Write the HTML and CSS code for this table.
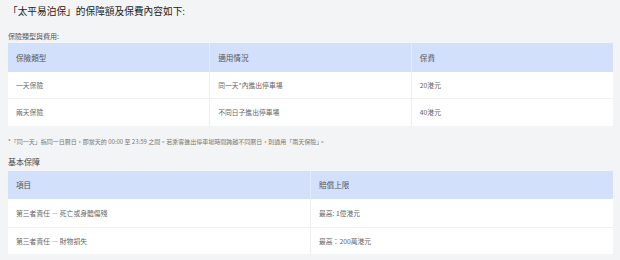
FILE: index.html
```html
<!DOCTYPE html>
<html lang="zh-Hant">
<head>
<meta charset="utf-8">
<link rel="stylesheet" href="styles.css">
</head>
<body>
<div class="page">
  <h1 class="title">「太平易泊保」的保障額及保費內容如下:</h1>
  <p class="sub sub-first">保險類型與費用:</p>
  <table class="grid grid-three">
    <thead>
      <tr><th>保險類型</th><th>適用情況</th><th>保費</th></tr>
    </thead>
    <tbody>
      <tr><td>一天保險</td><td>同一天*內進出停車場</td><td>20港元</td></tr>
      <tr><td>兩天保險</td><td>不同日子進出停車場</td><td>40港元</td></tr>
    </tbody>
  </table>
  <p class="note">*「同一天」指同一日曆日，即當天的 00:00 至 23:59 之間。若乘客進出停車場時間跨越不同曆日，則適用「兩天保險」。</p>
  <p class="sub sub-second">基本保障</p>
  <table class="grid grid-two">
    <thead>
      <tr><th>項目</th><th>賠償上限</th></tr>
    </thead>
    <tbody>
      <tr><td>第三者責任 — 死亡或身體傷殘</td><td>最高: 1億港元</td></tr>
      <tr><td>第三者責任 — 財物損失</td><td>最高：200萬港元</td></tr>
    </tbody>
  </table>
</div>
</body>
</html>
```

FILE: styles.css
```css
html, body {
  margin: 0;
  padding: 0;
  background: #f3f4f6;
}
body {
  font-family: "Noto Sans CJK TC", "Noto Sans", sans-serif;
}
.page {
  padding: 4px 7px 0 8px;
}
.title {
  margin: 0;
  font-size: 9.7px;
  line-height: 14px;
  font-weight: 400;
  color: #222;
}
.sub {
  margin: 0;
  color: #555;
}
.sub-first {
  margin-top: 13px;
  font-size: 7px;
  line-height: 10px;
}
.sub-second {
  margin-top: 10px;
  font-size: 8px;
  line-height: 11px;
  color: #444;
}
.grid {
  width: 100%;
  border-collapse: collapse;
  table-layout: fixed;
  background: #fff;
}
.grid-three {
  margin-top: 2px;
}
.grid-two {
  margin-top: 3.5px;
}
.grid th {
  background: #d2e0fc;
  color: #555;
  font-weight: 400;
  font-size: 7.6px;
  text-align: left;
  padding: 0 8px;
  height: 28.5px;
}
.grid th + th {
  border-left: 1px solid #e2eafd;
}
.grid td {
  color: #666;
  font-size: 6.8px;
  padding: 0 8px;
  height: 26.5px;
  border-top: 1px solid #f0f0f0;
}
.grid thead + tbody tr:first-child td {
  border-top: none;
}
.grid td + td {
  border-left: 1px solid #eeeeee;
}
.grid-two tbody tr:first-child td {
  height: 27.5px;
}
.note {
  margin: 11.5px 0 0;
  font-size: 6px;
  line-height: 9px;
  color: #777;
}
```
